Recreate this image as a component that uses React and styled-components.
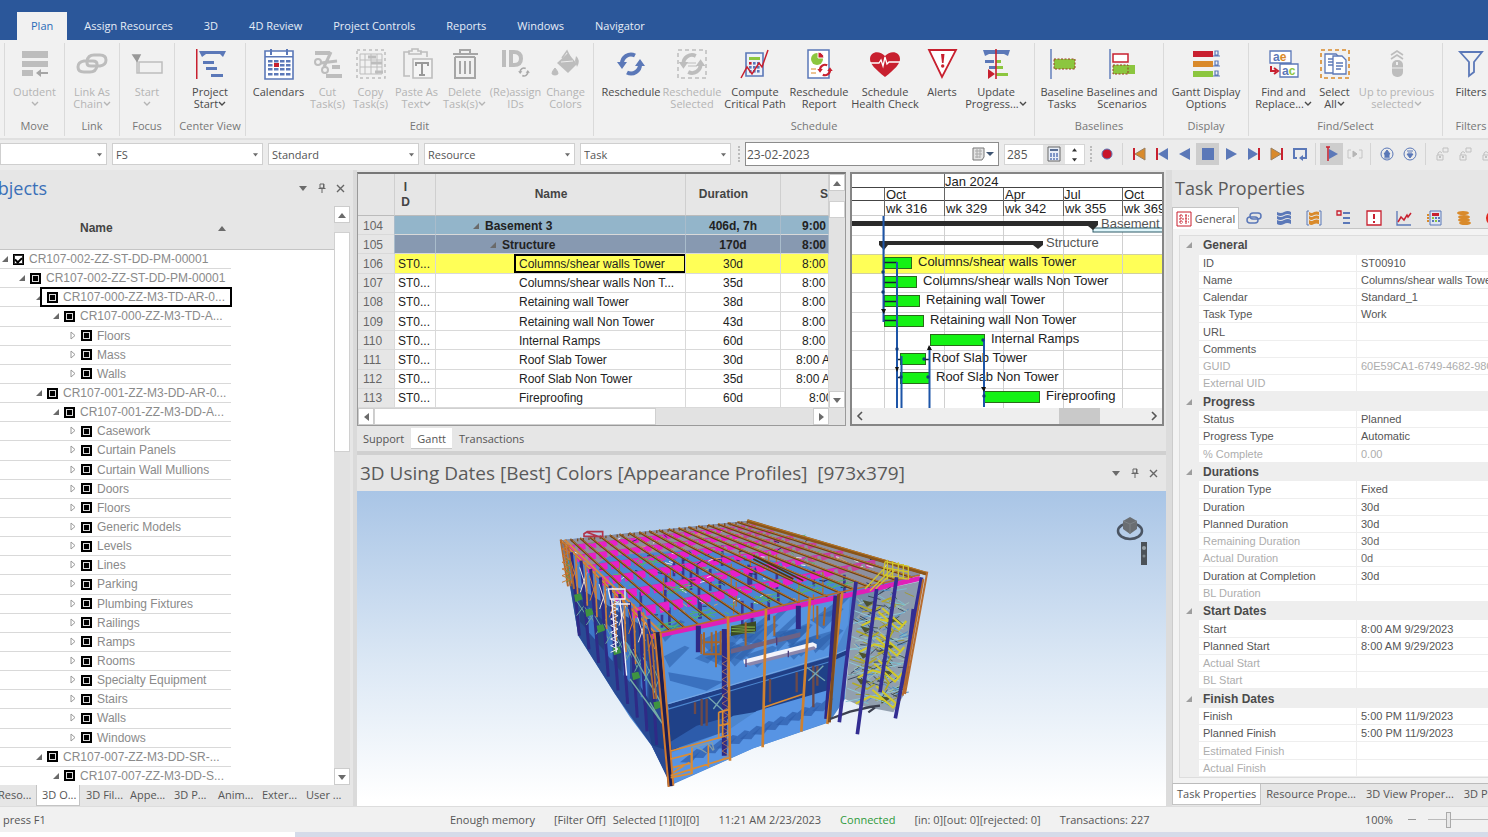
import { useState } from 'react';
import styled, { createGlobalStyle } from 'styled-components';

const UI = '"Open Sans", "Noto Sans", sans-serif';
const GRID = '"Liberation Sans", Arial, sans-serif';
const BLUE = '#5b78b8';
const GREY = '#bdbdbd';
const RED = '#c8202f';
const GREEN = '#8cc63f';
const ORANGE = '#d98a2b';

const tabs = ['Plan', 'Assign Resources', '3D', '4D Review', 'Project Controls', 'Reports', 'Windows', 'Navigator'];

const groups = [
  { name: 'Move', width: 60, items: [{ icon: 'outdent', lines: ['Outdent', ''], width: 58, menu: true, off: true }] },
  { name: 'Link', width: 55, items: [{ icon: 'link', lines: ['Link As', 'Chain'], width: 52, menu: true, off: true }] },
  { name: 'Focus', width: 55, items: [{ icon: 'start', lines: ['Start', ''], width: 52, menu: true, off: true }] },
  { name: 'Center View', width: 71, items: [{ icon: 'project', lines: ['Project', 'Start'], width: 60, menu: true }] },
  {
    name: 'Edit', width: 348, items: [
      { icon: 'calendar', lines: ['Calendars'], width: 54 },
      { icon: 'cut', lines: ['Cut', 'Task(s)'], width: 44, off: true },
      { icon: 'copy', lines: ['Copy', 'Task(s)'], width: 42, off: true },
      { icon: 'paste', lines: ['Paste As', 'Text'], width: 50, menu: true, off: true },
      { icon: 'trash', lines: ['Delete', 'Task(s)'], width: 46, menu: true, off: true },
      { icon: 'ids', lines: ['(Re)assign', 'IDs'], width: 56, off: true },
      { icon: 'bucket', lines: ['Change', 'Colors'], width: 44, off: true },
    ],
  },
  {
    name: 'Schedule', width: 441, items: [
      { icon: 'resched', lines: ['Reschedule'], width: 60 },
      { icon: 'reschedSel', lines: ['Reschedule', 'Selected'], width: 62, off: true },
      { icon: 'compute', lines: ['Compute', 'Critical Path'], width: 64 },
      { icon: 'report', lines: ['Reschedule', 'Report'], width: 64 },
      { icon: 'health', lines: ['Schedule', 'Health Check'], width: 68 },
      { icon: 'alerts', lines: ['Alerts'], width: 46 },
      { icon: 'update', lines: ['Update', 'Progress...'], width: 62, menu: true },
    ],
  },
  {
    name: 'Baselines', width: 129, items: [
      { icon: 'baseline', lines: ['Baseline', 'Tasks'], width: 46 },
      { icon: 'scenarios', lines: ['Baselines and', 'Scenarios'], width: 74 },
    ],
  },
  { name: 'Display', width: 85, items: [{ icon: 'gantt', lines: ['Gantt Display', 'Options'], width: 76 }] },
  {
    name: 'Find/Select', width: 194, items: [
      { icon: 'find', lines: ['Find and', 'Replace...'], width: 58, menu: true },
      { icon: 'select', lines: ['Select', 'All'], width: 44, menu: true },
      { icon: 'mouse', lines: ['Up to previous', 'selected'], width: 80, menu: true, off: true },
    ],
  },
  { name: 'Filters', width: 56, items: [{ icon: 'filter', lines: ['Filters'], width: 50 }] },
];

const tree = [
  [0, 'CR107-002-ZZ-ST-DD-PM-00001', 'checked'],
  [1, 'CR107-002-ZZ-ST-DD-PM-00001'],
  [2, 'CR107-000-ZZ-M3-TD-AR-0...', 'focused'],
  [3, 'CR107-000-ZZ-M3-TD-A...'],
  [4, 'Floors'], [4, 'Mass'], [4, 'Walls'],
  [2, 'CR107-001-ZZ-M3-DD-AR-0...'],
  [3, 'CR107-001-ZZ-M3-DD-A...'],
  [4, 'Casework'], [4, 'Curtain Panels'], [4, 'Curtain Wall Mullions'], [4, 'Doors'], [4, 'Floors'],
  [4, 'Generic Models'], [4, 'Levels'], [4, 'Lines'], [4, 'Parking'], [4, 'Plumbing Fixtures'],
  [4, 'Railings'], [4, 'Ramps'], [4, 'Rooms'], [4, 'Specialty Equipment'], [4, 'Stairs'], [4, 'Walls'], [4, 'Windows'],
  [2, 'CR107-007-ZZ-M3-DD-SR-...'],
  [3, 'CR107-007-ZZ-M3-DD-S...'],
];

const tasks = [
  { no: 104, name: 'Basement 3', dur: '406d, 7h', start: '9:00 AM', color: '#93b5ca', level: 1 },
  { no: 105, name: 'Structure', dur: '170d', start: '8:00 AM', color: '#8799b1', level: 2 },
  { no: 106, name: 'Columns/shear walls Tower', dur: '30d', start: '8:00 AM', color: '#ffff57', active: true },
  { no: 107, name: 'Columns/shear walls Non T...', dur: '35d', start: '8:00 AM' },
  { no: 108, name: 'Retaining wall Tower', dur: '38d', start: '8:00 AM' },
  { no: 109, name: 'Retaining wall Non Tower', dur: '43d', start: '8:00 AM' },
  { no: 110, name: 'Internal Ramps', dur: '60d', start: '8:00 AM' },
  { no: 111, name: 'Roof Slab Tower', dur: '30d', start: '8:00 AM', indent: 15 },
  { no: 112, name: 'Roof Slab Non Tower', dur: '35d', start: '8:00 AM', indent: 15 },
  { no: 113, name: 'Fireproofing', dur: '60d', start: '8:00 AM', indent: 28 },
];

const props = [
  ['General', [['ID', 'ST00910'], ['Name', 'Columns/shear walls Tower'], ['Calendar', 'Standard_1'], ['Task Type', 'Work'], ['URL', ''], ['Comments', ''], ['GUID', '60E59CA1-6749-4682-98CA', 1], ['External UID', '', 1]]],
  ['Progress', [['Status', 'Planned'], ['Progress Type', 'Automatic'], ['% Complete', '0.00', 1]]],
  ['Durations', [['Duration Type', 'Fixed'], ['Duration', '30d'], ['Planned Duration', '30d'], ['Remaining Duration', '30d', 2], ['Actual Duration', '0d', 2], ['Duration at Completion', '30d'], ['BL Duration', '', 1]]],
  ['Start Dates', [['Start', '8:00 AM 9/29/2023'], ['Planned Start', '8:00 AM 9/29/2023'], ['Actual Start', '', 1], ['BL Start', '', 1]]],
  ['Finish Dates', [['Finish', '5:00 PM 11/9/2023'], ['Planned Finish', '5:00 PM 11/9/2023'], ['Estimated Finish', '', 1], ['Actual Finish', '', 1]]],
];

// two chasing arrows
const Cycle = ({ color, x = 16, y = 16, s = 1 }) => (
  <g transform={`translate(${x} ${y}) scale(${s})`} fill="none" stroke={color} strokeWidth="4">
    <path d="M-9 0A9 9 0 0 1 4-8.500" />
    <path d="M9 0A9 9 0 0 1-4 8.500" />
    <path d="M-14-2h10l-5 7zM14 2H4l5-7z" fill={color} stroke="none" />
  </g>
);

const icons = {
  outdent: <g fill={GREY}><path d="M3 3h26v7H3zM3 13h26v6H3zM3 22h11v6H3z" /><path d="M17 25l5-4v3h7v2h-7v3z" fill="#a5a5a5" /></g>,
  link: <g fill="none" stroke={GREY} strokeWidth="3"><path d="M11 15v-2q1-6 7-6h6q6 0 6 5t-6 6h-9q-4 0-4-3" /><path d="M21 16v2q-1 6-7 6H8q-6 0-6-5t6-6h9q4 0 4 3" /></g>,
  start: <g fill="none" stroke={GREY} strokeWidth="1.500"><path d="M6 12v13h25V14H8v11" /><path d="M2 7h7l-3 6z" fill="#999" stroke="#999" /></g>,
  project: <g fill={BLUE}><path d="M5 3h27l-3 6-3-3H12l-4 3zM9 13h11v3H9zM12 19h11v3H12zM17 26h12v3H17z" /><path d="M2 1h1.500v30H2z" fill={RED} /></g>,
  calendar: (
    <g fill={BLUE}>
      <path d="M2 3h28v28H2z" fill="#fff" stroke={BLUE} strokeWidth="1.600" />
      <path d="M2 8h28v1.500H2zM7 1h2v6H7zM23 1h2v6h-2z" />
      {[12, 16, 20, 25].map((y) => [5, 11, 17, 23].map((x) => <rect key={x + y * 40} x={x} y={y} width="4.500" height="2.500" />))}
      <path d="M11 15h5v4h-5z" fill={RED} />
    </g>
  ),
  cut: (
    <g fill="none" stroke={GREY} strokeWidth="2">
      <path d="M3 5h15M20 19h8M14 28h16" strokeWidth="4" />
      <circle cx="6" cy="14" r="3" /><circle cx="13" cy="22" r="3" />
      <path d="M9 15l16-2M12 19L19 4" strokeWidth="3" />
    </g>
  ),
  copy: <g fill="none" stroke={GREY}><rect x="2" y="2" width="28" height="28" strokeDasharray="3 3" strokeWidth="1.500" /><path d="M5 6h22v20H5zM5 12h22M5 19h22M10 6v20M16 6v20M22 6v20" /><path d="M13 9h8M16 15h11M20 24h8" strokeWidth="3" /></g>,
  paste: <g fill="none" stroke={GREY} strokeWidth="1.600"><path d="M9 28H3V4h5M19 4h7v5" /><path d="M8 6V3h3V1h6v2h3v3z" /><path d="M12 11h19v19H12z" fill="#f5f5f5" /><path d="M15 18v-3h12v3M21 15v11M18 27h6" stroke="#999" strokeWidth="2" /></g>,
  trash: <g fill="none" stroke="#a6a6a6" strokeWidth="2"><path d="M4 6h25M11 5V2h10v3M6 9v21h20V9M6 9h20" /><path d="M11 13v13M16 13v13M21 13v13" /></g>,
  ids: <g fill="none" stroke={GREY} strokeWidth="4"><path d="M4 2v17M11 4h3q7 0 7 6.500t-7 6.500h-3z" /><Cycle color="#a8a8a8" x={24} y={24} s={0.42} /></g>,
  bucket: <g fill={GREY}><path d="M7 15L18 5l9 11-9 9z" /><path d="M12 10l5-7 3 6" fill="none" stroke={GREY} strokeWidth="1.500" /><path d="M5 20q6 7 0 7t0-7z" stroke={GREY} /><path d="M26 8q5 4 1 11l-2-6z" /><path d="M11 14l12-1" stroke="#eee" /></g>,
  resched: <Cycle color={BLUE} />,
  reschedSel: <g><rect x="2" y="2" width="28" height="28" fill="none" stroke={GREY} strokeWidth="1.500" strokeDasharray="4 3" /><Cycle color={GREY} s={0.95} /><path d="M11 15h9M12 18h9" stroke={GREY} /></g>,
  compute: (
    <g>
      <path d="M7 5h17v23H7z" fill="#eef1f8" stroke={BLUE} strokeWidth="1.600" />
      <path d="M10 9h11v3H10z" fill={GREEN} />
      {[14, 18, 22].map((y) => [10, 14, 18].map((x) => <rect key={x + y * 30} x={x} y={y} width="2.600" height="2.600" fill={x + y === 24 ? RED : BLUE} />))}
      <path d="M2 30l6-11 5 7 7-11 3 4 6-17" fill="none" stroke={RED} strokeWidth="1.500" />
    </g>
  ),
  report: (
    <g>
      <path d="M5 2h21v28H5z" fill="#fff" stroke={BLUE} strokeWidth="1.500" />
      <circle cx="14" cy="11" r="6" fill={GREEN} /><path d="M15 10V4a6 6 0 0 1 6 6z" fill={RED} stroke="#fff" />
      <path d="M8 21h5M8 25h5" stroke={ORANGE} />
      <Cycle color={RED} x={22} y={22} s={0.55} />
    </g>
  ),
  health: <g><path d="M16 29C6 21 1 16 1 11 1 3 11 2 16 8c5-6 15-5 15 3 0 5-5 10-15 18z" fill={RED} /><path d="M1 15h9l2-3 2 6 2-9 2 7 2-2h11" fill="none" stroke="#fff" strokeWidth="1.300" /></g>,
  alerts: <g><path d="M3 2h27L16 29z" fill="#fff" stroke={RED} strokeWidth="1.800" /><path d="M15 6h3.500l-1 9h-1.500z" fill={RED} /><circle cx="16.700" cy="18" r="1.700" fill={RED} /></g>,
  update: <g><path d="M3 2h27l-2 6-4-2H9L5 8z" fill={BLUE} /><path d="M5 12h9v3H5zM9 18h8v3H9z" fill={BLUE} /><path d="M16 12h5v3h-5zM16 18h7v3h-7zM16 25h12v3H16z" fill={GREEN} /><path d="M16 1v30" stroke={RED} strokeWidth="1.600" /><path d="M8 21l7 5-7 5z" fill={RED} /></g>,
  baseline: <g><path d="M5 1v30" stroke={BLUE} strokeWidth="1.400" /><path d="M8 11h21v10H8z" fill={GREEN} stroke="#9b3b22" strokeDasharray="2 1.500" /></g>,
  scenarios: <g><path d="M4 1v30" stroke={BLUE} strokeWidth="1.400" /><path d="M7 6h15v8H7z" fill="#fff" stroke={RED} strokeWidth="1.500" /><path d="M7 17h22v9H7z" fill={GREEN} /><path d="M7 17h15v9H7z" fill="none" stroke="#9b3b22" strokeDasharray="2 1.500" /></g>,
  gantt: (
    <g>
      {[RED, ORANGE, GREEN].map((c, i) => (
        <g key={c}>
          <path d={`M3 ${3 + i * 10}h20v6H3z`} fill={c} />
          <path d={`M23 ${8 + i * 10}h7M25 ${3 + i * 10}h3v4h-3z`} fill="none" stroke={BLUE} strokeWidth="1.200" />
        </g>
      ))}
    </g>
  ),
  find: (
    <g fontFamily="Liberation Sans, sans-serif" fontWeight="700" fontSize="12">
      <path d="M2 3h21v12H2zM12 16h18v13H12z" fill="#fff" stroke={BLUE} strokeWidth="1.300" />
      <text x="5" y="13" fill={BLUE}>a<tspan fill={ORANGE}>e</tspan></text>
      <text x="14" y="27" fill={BLUE}>a<tspan fill={GREEN}>c</tspan></text>
      <path d="M3 18v5h5M6 20l4 3-4 3" fill="none" stroke={RED} strokeWidth="2" />
    </g>
  ),
  select: <g fill="none" stroke={BLUE} strokeWidth="1.300"><rect x="2" y="2" width="28" height="28" stroke={ORANGE} strokeWidth="1.600" strokeDasharray="4 3" /><path d="M6 6h11l2 2v17H6z" fill="#fff" /><path d="M9 11h7M9 14h7M9 17h5" /><path d="M14 8h9l4 4v14H14z" fill="#fff" /><path d="M17 15h7M17 18h7M17 21h5" /></g>,
  mouse: <g><path d="M10 7l6-4 6 4M10 11l6-4 6 4" fill="none" stroke={GREY} strokeWidth="1.600" /><rect x="11" y="12" width="11" height="17" rx="5" fill={GREY} /><path d="M11 20h11" stroke="#eee" /><path d="M16 14v3" stroke="#eee" strokeWidth="2" /></g>,
  filter: <path d="M5 4h22l-8 10v10l-5 4V14z" fill="none" stroke={BLUE} strokeWidth="1.800" />,
};

const playIcons = {
  record: <g><circle cx="8" cy="8" r="5" fill="#c8142b" stroke={BLUE} /></g>,
  first: <g><path d="M3 2v12" stroke={RED} strokeWidth="2" /><path d="M14 2v12L4 8z" fill={ORANGE} stroke="#9a8060" /></g>,
  prev: <g><path d="M3 2v12" stroke={RED} strokeWidth="2" /><path d="M14 2v12L4 8z" fill={BLUE} /></g>,
  back: <path d="M13 2v12L2 8z" fill={BLUE} />,
  stop: <path d="M2 2h12v12H2z" fill={BLUE} />,
  play: <path d="M3 2v12l11-6z" fill={BLUE} />,
  next: <g><path d="M13 2v12" stroke={RED} strokeWidth="2" /><path d="M2 2v12l10-6z" fill={BLUE} /></g>,
  last: <g><path d="M13 2v12" stroke={RED} strokeWidth="2" /><path d="M2 2v12l10-6z" fill={ORANGE} stroke="#9a8060" /></g>,
  loop: <g><path d="M5 12H2V3h12v9h-3" fill="none" stroke={BLUE} strokeWidth="2" /><path d="M11 9v6l-4-3z" fill={BLUE} /></g>,
  flag: <g><path d="M4 1v14M2 1h4" stroke={RED} strokeWidth="1.500" /><path d="M5 3v10l9-5z" fill={BLUE} /></g>,
  frame: <g fill="none" stroke="#c4c4c4"><path d="M1 4h3M1 12h3M12 4h3M12 12h3M1 4v8M15 4v8" /><path d="M6 5v6l4-3z" fill="#b5b5b5" stroke="#b5b5b5" /></g>,
  up: <g fill="none" stroke={BLUE}><circle cx="8" cy="8" r="6" /><path d="M5 8l3-4 3 4zM6 8v3h4V8M5 12h6" fill={BLUE} /></g>,
  down: <g fill="none" stroke={BLUE}><circle cx="8" cy="8" r="6" /><path d="M5 8l3 4 3-4zM6 7h4M5 5h6" fill={BLUE} /></g>,
  lock: <g fill="none" stroke="#c0c0c0"><path d="M3 9h6v5H3zM4 9V7q2-3 4 0M9 2h5v4H9z" /><path d="M5 11h2" strokeWidth="2" /></g>,
};

const player = [
  ['record', 'Record'], null, ['first', 'First'], ['prev', 'Previous'], ['back', 'Play back'], ['stop', 'Stop', 1], ['play', 'Play'], ['next', 'Next'],
  ['last', 'Last'], ['loop', 'Loop'], null, ['flag', 'Focus time', 1], ['frame', 'Frame'], null, ['up', 'Step up'], ['down', 'Step down'], null,
  ['lock', 'Lock'], ['lock', 'Unlock'], ['lock', 'Lock all'],
];

const propIcons = {
  Links: <g fill="none" stroke={BLUE} strokeWidth="1.500"><rect x="4" y="3" width="11" height="6" rx="3" /><rect x="1" y="7" width="11" height="6" rx="3" /></g>,
  Resources: <g fill={BLUE}><path d="M1 2q4 2 7 0 4-2 7 0v3q-4-2-7 0-4 2-7 0zM1 6q4 2 7 0 4-2 7 0v3q-4-2-7 0-4 2-7 0zM1 10q4 2 7 0 4-2 7 0v4q-4-2-7 0-4 2-7 0z" /></g>,
  Assignments: <g><path d="M3 1H1v14h2M13 1h2v14h-2" fill="none" stroke={BLUE} /><path d="M3 2q3 2 5 0 3-1 5 0v3q-3-1-5 0-3 2-5 0zM3 6q3 2 5 0 3-1 5 0v3q-3-1-5 0-3 2-5 0zM3 10q3 2 5 0 3-1 5 0v4q-3-1-5 0-3 2-5 0z" fill={ORANGE} /></g>,
  Codes: <g><path d="M1 1h4v4H1z" fill="none" stroke={RED} strokeWidth="1.300" /><path d="M7 3h7M7 8h7M7 13h7" stroke={BLUE} strokeWidth="2" /></g>,
  Alerts: <g><path d="M1 1h14v14H1z" fill="#fff" stroke={RED} strokeWidth="1.300" /><path d="M8 4v5M8 11v2" stroke={RED} strokeWidth="2" /></g>,
  Chart: <g fill="none"><path d="M1 1v14h14" stroke={BLUE} strokeWidth="1.300" /><path d="M2 12l3-5 3 3 3-5 1 2 3-4" stroke={RED} strokeWidth="1.500" /></g>,
  Costs: <g><path d="M4 1h11v14H4z" fill="#dfe5f2" stroke={BLUE} /><path d="M6 3h7v3H6z" fill={RED} /><path d="M6 7h2v2H6zM9 10h2v2H9z" fill={GREEN} /><path d="M12 7h2v2h-2zM6 10h2v2H6zM9 7h2v2H9zM12 10h2v2h-2z" fill={BLUE} /><path d="M2 4v9" stroke={ORANGE} strokeWidth="2" strokeDasharray="2 1" /></g>,
  Money: <g fill={ORANGE}><ellipse cx="7" cy="3" rx="6" ry="2" /><ellipse cx="8" cy="7" rx="6" ry="2" /><ellipse cx="8" cy="10" rx="6" ry="2" /><ellipse cx="9" cy="13" rx="6" ry="2" /></g>,
  Status: <g><circle cx="8" cy="8" r="8" fill="#e0261c" /><path d="M8 8V1a7 7 0 0 1 7 7z" fill="#3aa53a" /></g>,
};

const Arrow = ({ open }) => (
  <svg width="10" height="10" viewBox="0 0 10 10">
    {open ? <path d="M8 2v6H2z" fill="#6a6a6a" /> : <path d="M3 1v7l4-3.500z" fill="none" stroke="#999" />}
  </svg>
);

const Tri = ({ dir = 'down', color = '#6b6b6b', size = 8 }) => {
  const d = { up: 'M0 7h8L4 2z', down: 'M0 2h8L4 7z', left: 'M7 0v8L2 4z', right: 'M2 0v8l5-4z' };
  return <svg width={size} height={size} viewBox="0 0 8 8"><path d={d[dir]} fill={color} /></svg>;
};

const PanelButtons = () => (
  <WindowButtons>
    <button aria-label="Menu"><Tri /></button>
    <button aria-label="Pin"><svg width="10" height="10" viewBox="0 0 10 10" fill="none" stroke="#666"><path d="M3 1h4v4H3zM1.500 5.500h7M5 6v4M6.500 1v4" /></svg></button>
    <button aria-label="Close"><svg width="9" height="9" viewBox="0 0 9 9" stroke="#666" strokeWidth="1.400"><path d="M1 1l7 7M8 1l-7 7" /></svg></button>
  </WindowButtons>
);

const bars = [
  [32, 59, 66, 'Columns/shear walls Tower', 2],
  [32, 64, 71, 'Columns/shear walls Non Tower', 3],
  [32, 67, 74, 'Retaining wall Tower', 4],
  [32, 71, 78, 'Retaining wall Non Tower', 5],
  [78, 132, 139, 'Internal Ramps', 6],
  [48, 73, 80, 'Roof Slab Tower', 7],
  [48, 77, 84, 'Roof Slab Non Tower', 8],
  [132, 187, 194, 'Fireproofing', 9],
];
const rowTop = (i) => 42 + i * 19.1;

const GanttChart = () => (
  <ChartSvg role="img" aria-label="Gantt chart">
    <g shapeRendering="crispEdges" fill="none">
      <rect y={rowTop(2)} width="100%" height="19" fill="#ffff57" />
      {[1, 2, 3, 4, 5, 6, 7, 8, 9].map((i) => <rect key={i} y={rowTop(i)} width="100%" height="1" fill={i === 2 || i === 3 ? '#d0d0a0' : '#d6d6d6'} />)}
      {[32, 92, 151, 211, 270].map((x) => <path key={x} d={`M${x}.500 42v192`} stroke="#d0d0d0" />)}
      <rect y="13" width="100%" height="1" fill="#444" />
      <rect y="26" width="100%" height="1" fill="#444" />
      <rect y="41" width="100%" height="1" fill="#ccc" />
      <path d="M32.500 14v28M92.500 0v42M151.500 14v28M211.500 14v28M270.500 14v28" stroke="#666" />
    </g>
    <text x="93" y="12">Jan 2024</text>
    {[[34, 'Oct'], [153, 'Apr'], [212, 'Jul'], [272, 'Oct']].map(([x, t]) => <text key={x} x={x} y="25">{t}</text>)}
    {[[34, 'wk 316'], [94, 'wk 329'], [153, 'wk 342'], [213, 'wk 355'], [272, 'wk 369']].map(([x, t]) => <text key={x} x={x} y="39">{t}</text>)}
    <text x="249" y="54" fill="#555">Basement 3</text>
    <rect x="241" y="54" width="100%" height="4" fill="#e0f6fb" stroke="#2d5a66" />
    <path d="M0 47h246v4l-5 5-5-4H0z" fill="#2b2b2b" />
    <path d="M27 67h164v4l-5 4-5-4H36l-4 5-5-5z" fill="#2b2b2b" />
    <text x="194" y="73" fill="#555">Structure</text>
    {bars.map(([x1, x2, tx, label, row]) => (
      <g key={label}>
        <rect x={x1 + 0.5} y={Math.round(rowTop(row)) + 3.5} width={x2 - x1} height="11" fill="#14f214" stroke="#2a6a1a" />
        <text x={tx} y={Math.round(rowTop(row)) + 12}>{label}</text>
      </g>
    ))}
    <path d="M32 88.500h13M32 108.500h13M32 127.500h13M32 146.500h13M45 185.500h5M45 203.500h5M73 185.500h5" stroke="#123" strokeWidth="1.500" />
    <path d="M31.500 42v106M45 88v146M49.500 182v52M77.500 173v61M132 165v68" stroke="#1d55a8" strokeWidth="2" fill="none" />
    <path d="M29 135h5l-2 5zM43 193h4l-2 5zM75 176h5l-3-5zM129 213h5l-2 5z" fill="#111" />
    {[[31, 98], [31, 118], [45, 175], [49, 203], [72, 185], [76, 203], [131, 166], [132, 222]].map(([x, y]) => <circle key={x + y * 9} cx={x} cy={y} r="1.700" fill="#123a7a" />)}
  </ChartSvg>
);

// ---- structural steel model ----
const A = [62, 124], B = [622, 66], C = [1160, 226], D = [352, 408];
const mix = (p, q, t) => [p[0] + (q[0] - p[0]) * t, p[1] + (q[1] - p[1]) * t];
const roof = (u, v) => mix(mix(A, B, u), mix(D, C, u), v);
const seg = (p, q) => `M${p[0].toFixed(1)} ${p[1].toFixed(1)}L${q[0].toFixed(1)} ${q[1].toFixed(1)}`;
const noise = (n) => { const s = Math.sin(n * 127.1) * 43758.5; return s - Math.floor(s); };
const range = (n) => Array.from({ length: n }, (_, i) => i);
const zig = (x, y1, y2, w, n) => 'M' + range(n + 1).map((i) => `${x + (i % 2 ? w : 0)} ${y1 + ((y2 - y1) * i) / n}`).join('L');

const Model = () => (
  <svg width="400" height="300" viewBox="0 0 1200 900" role="img" aria-label="Steel frame model">
    <path d="M62 124L622 66 1150 222 1040 262 930 375 915 600 868 670 640 748 394 858 335 740 270 655 225 585 115 410 88 250z" fill="#4c86cf" />
    <path d="M62 124L622 66 1150 222 352 408z" fill="#8d8f9e" />
    <path d="M130 220L210 170 480 150 800 200 930 275 560 370 352 405z" fill="#4a86d2" />
    <path d="M350 408L930 280 925 375 880 468 385 618 280 520z" fill="#5694e0" />
    {range(26).map((i) => {
      const x = 360 + noise(i) * 480;
      const y = 400 - (x - 360) * 0.15 + noise(i + 40) * 120;
      return <path key={i} d={`M${x} ${y}l${50 + noise(i + 9) * 50} ${-8 - noise(i + 5) * 60}l14 6l-60 60z`} fill="#2c5da8" opacity="0.550" />;
    })}
    <path d="M385 520L550 548 500 575 390 545z" fill="#2f62b0" opacity="0.700" />
    <path d="M385 632L885 485 872 600 580 650 390 760z" fill="#1f4188" />
    <path d="M335 740L392 762 570 690 650 636 868 572 868 668 640 748 394 856z" fill="#5794e4" />
    <path d="M392 728L470 680 560 655 560 696 396 752z" fill="#2d5cab" />
    {range(12).map((i) => <path key={i} d={`M${420 + i * 36} ${790 - i * 14}l50-40 14 3-30 38z`} fill="#2f5fae" opacity="0.750" />)}
    <path d="M88 250L352 408 392 858 335 740 225 585 115 410z" fill="#294a94" />
    {range(9).map((i) => <path key={i} d={`M${120 + i * 26} ${300 + i * 24}l20 20v${70 + i * 8}l-20-22z`} fill={i % 2 ? '#3d76c8' : '#24407f'} />)}
    <path d="M300 560L388 700 392 758 335 738z" fill="#1e3f86" />

    {/* interior columns */}
    {range(38).map((i) => {
      const p = roof(0.08 + noise(i + 3) * 0.74, 0.25 + noise(i + 70) * 0.7);
      return <path key={i} d={`M${p[0]} ${p[1]}v${35 + noise(i) * 50}`} stroke={i % 3 ? '#3b3690' : '#b9702c'} strokeWidth={i % 3 ? 8 : 4} />;
    })}
    {/* trusses, the near ones are deeper */}
    {[0.06, 0.16, 0.27, 0.4, 0.55, 0.73].map((v) => (
      <g key={v}>
        <path d={seg(roof(0, v), roof(1, v))} stroke="#cf2fae" strokeWidth={3 + v * 3} />
        {range(18).map((k) => {
          const u = k / 18;
          const a = roof(u, v), b = roof(u + 0.042, v);
          const h = (15 + v * 15) * (1 - u * 0.45);
          return <path key={k} d={`M${a[0]} ${a[1]}L${b[0]} ${b[1]}l2 ${h}L${a[0] + 5} ${a[1] + h + 3}z`} fill={u > 0.78 ? '#c4459c' : '#e81fca'} />;
        })}
      </g>
    ))}
    {range(120).map((i) => {
      const p = roof(noise(i), 0.05 + noise(i + 200) * 0.9);
      return <path key={i} d={`M${p[0]} ${p[1]}l${6 + noise(i + 4) * 16} ${10 - noise(i + 8) * 20}`} stroke={['#e8e6ee', '#58b568', '#2b2f66', '#c9a06a'][i % 4]} strokeWidth="3" />;
    })}
    {/* green bracing below the joists */}
    {[[450, 345], [640, 300], [770, 270], [380, 270], [350, 380], [860, 255], [290, 185]].map(([x, y]) => (
      <path key={x} d={`M${x} ${y}l70-16M${x} ${y + 14}l80-20M${x} ${y}l18 14 14-18 18 14 14-18M${x + 5} ${y - 8}l70 16`} stroke="#4fb46a" strokeWidth="3" fill="none" />
    ))}
    {/* joists */}
    {range(20).map((i) => {
      const u = i / 19;
      const a = roof(u, 0), b = roof(u, 1);
      return <g key={i}><path d={seg(a, b)} stroke="#6d3f12" strokeWidth="6" /><path d={seg([a[0], a[1] - 2], [b[0], b[1] - 2])} stroke="#b87a35" strokeWidth="3" /></g>;
    })}
    {range(34).map((i) => { const p = roof(i / 33, 0); return <path key={i} d={`M${p[0]} ${p[1]}v8`} stroke="#7a4a22" strokeWidth="4" />; })}
    <path d="M622 66L1160 224" stroke="#8a5518" strokeWidth="11" />
    <path d="M622 63L1160 220" stroke="#b87728" strokeWidth="3" />
    <path d="M640 180L760 240M640 170L790 245" stroke="#4e3312" strokeWidth="5" />

    {/* roof edges */}
    <path d="M330 414L945 284 1140 238" stroke="#df1fb8" strokeWidth="15" fill="none" />
    <path d="M350 404L945 270 1140 228" stroke="#b86d2c" strokeWidth="5" fill="none" />
    <path d="M62 124L350 405M74 122L362 398" stroke="#d08a45" strokeWidth="6" />
    <path d="M132 104l10-6h46v14h-56zM140 100l40 14" stroke="#b2344a" strokeWidth="5" fill="none" />

    {/* left elevation */}
    {range(9).map((i) => {
      const x = 100 + i * 29, top = 160 + i * 25, bottom = 410 + i * 41;
      return (
        <g key={i}>
          <path d={`M${x - 6} ${top}L${x + 18} ${bottom}`} stroke="#2f2a86" strokeWidth={9} />
          <path d={`M${x - 22} ${top - 20}l6 ${110 + i * 10}`} stroke="#d07d35" strokeWidth="5" />
          <path d={`M${x - 10} ${top + 20}l22 70M${x + 12} ${top + 35}l-20 60`} stroke={i % 2 ? '#e9dccc' : '#d07d35'} strokeWidth="3" />
          <path d={`M${x + 6} ${top + 140}l40 ${60 + i * 4}M${x + 40} ${top + 150}l-30 ${40 + i * 3}`} stroke="#6aa79d" strokeWidth="3" />
        </g>
      );
    })}
    {[[112, 295], [145, 340], [180, 388], [228, 455], [285, 530], [350, 618]].map(([x, y]) => <path key={x} d={`M${x - 10} ${y - 8}l20-4 6 18-22 8z`} fill="#3f9440" />)}
    <path d="M62 122l22 140M72 130l20 132M84 140l18 130" stroke="#b4672a" strokeWidth="6" />
    <path d={zig(66, 130, 250, 24, 12)} stroke="#c97933" strokeWidth="3" fill="none" />
    <path d={zig(78, 180, 250, 14, 8)} stroke="#4a9b4c" strokeWidth="2" fill="none" />
    <path d={zig(212, 300, 460, 22, 16)} stroke="#ece8f4" strokeWidth="3" fill="none" />
    <path d="M205 270h50v30h-44zM215 300l14 160M240 300l20 230M225 315h45" stroke="#f3f2fa" strokeWidth="4" fill="none" />
    <path d="M258 430l110 190M270 540l110 150M330 610l50 85" stroke="#74ada6" strokeWidth="4" />
    <path d="M322 405l20 195M335 410l14 190" stroke="#b56e31" strokeWidth="5" />

    {/* floor edge and front elevation */}
    <path d="M385 622L885 476 925 458" stroke="#203f86" strokeWidth="12" fill="none" />
    <path d="M385 614L885 466 925 450" stroke="#79a9e4" strokeWidth="3" fill="none" />
    <path d="M475 380v80M553 390v380M888 290l-28 370M775 320v70" stroke="#2e2a86" strokeWidth="15" />
    <path d="M573 450l208-50v14l-208 50z" fill="#6c6285" />
    <path d="M610 482l208-52 12 6v10l-204 52-14-4z" fill="#f4f4fb" />
    <path d="M612 494l210-52 8 8-200 50z" fill="#8b86ac" />
    <path d="M618 480v24M745 455v20M710 415v24" stroke="#4b3c7c" strokeWidth="4" />
    <path d="M573 382l75-15v30l-75 14z" fill="#3b4a24" /><path d={zig(575, 380, 402, 70, 5)} stroke="#87b64a" strokeWidth="2" fill="none" />
    <path d="M484 405v60M492 400v66h50v-70M492 430h50M515 400v60M528 395v110M617 370v70M832 320v100M855 325l-4 55M703 350v60" stroke="#a5652c" strokeWidth="6" fill="none" />
    <path d="M485 600v80M500 600v80M770 520v60M820 500v125M832 500v60M465 610v35M690 540v70" stroke="#6d4a49" strokeWidth="7" />
    <path d="M505 595l45 40M550 590l-30 40M800 505l55 40M850 500l-45 45" stroke="#76a6b0" strokeWidth="4" />
    <path d="M350 400L392 862" stroke="#1c1d52" strokeWidth="17" />
    <path d="M344 402L386 864M362 402L400 860" stroke="#d0792f" strokeWidth="6" />
    <path d={zig(546, 470, 780, 20, 26)} stroke="#d08b4c" strokeWidth="2" fill="none" />
    <path d="M564 352L570 785M678 330L668 745M810 296L784 698M907 280L862 675" stroke="#cf812f" strokeWidth="8" />
    <path d="M896 285L868 670" stroke="#7e4c20" strokeWidth="9" />
    <path d="M672 625L788 586M392 756L568 708M536 640v80M536 640l30-8M536 680l30-6M548 640v70M392 830L570 775M392 780l62-16v60l-62 12M400 805l50-12M505 735v70M400 820l48-30M456 745v80" stroke="#dc8c33" strokeWidth="5" fill="none" />
    <path d="M456 745l60-14 6 22M470 742l30 20M505 735l15 20" stroke="#839ba8" strokeWidth="4" fill="none" />

    {/* stair tower */}
    <path d="M945 290L1150 245 1090 590 1060 640 960 620 915 600z" fill="#7d8c9c" opacity="0.800" />
    {range(210).map((i) => {
      const t = noise(i), y = 275 + t * 335, x = 945 - t * 28 + noise(i + 260) * 150;
      return <path key={i} d={`M${x} ${y}l${14 + noise(i + 3) * 28} ${(noise(i + 12) - 0.5) * 54}`} stroke={['#79bed0', '#9bc0ba', '#47584d', '#a09a3a', '#4f8fc7', '#3c4a5c'][i % 6]} strokeWidth="3" />;
    })}
    {range(4).map((i) => {
      const y = 288 + i * 78, x = 955 - i * 6;
      return (
        <g key={i} fill="none">
          <path d={`M${x + 12} ${y + 15}l34 8-20 12zM${x + 82} ${y + 70}l36 4-30 18z`} fill="#4c5230" />
          <path d={`M${x - 20} ${y + 86}l160-34M${x - 15} ${y + 46}l150 56`} stroke="#8fc6d4" strokeWidth="3" />
          <path d={`M${x} ${y + 30}l45 18 22-14M${x + 70} ${y + 20}l26-10 14 20-12 22`} stroke="#b3aa24" strokeWidth="5" />
          <path d={`M${x + 60} ${y + 50}l62 54 22-26M${x + 72} ${y + 40}l58 50M${x + 10} ${y + 92}l44-22 40 10`} stroke="#d2c829" strokeWidth="6" />
        </g>
      );
    })}
    <path d="M1035 188l70 14v40M1042 182v60M1035 188l-5 40 72 12M1030 205l74 14M1058 186v50M1075 190v50M1090 195v46M975 270l60-64M990 275l62-62M1006 270l58-56" stroke="#d0c62c" strokeWidth="4" fill="none" />
    <path d="M870 660l60-22 60-14 30-4M985 640l20-14" stroke="#3c4150" strokeWidth="7" fill="none" />
    <path d="M948 248L898 670M1010 270L952 706M1145 235L1066 658M1070 235L1020 580M1120 330L1095 560" stroke="#332d92" strokeWidth="11" />
    <path d="M1162 218L1095 585M1150 240L1088 590" stroke="#b86d30" strokeWidth="6" />
  </svg>
);

const App = () => {
  const [tab, setTab] = useState('Plan');

  return (
    <Page>
      <GlobalStyle />
      <TopTabs>
        {tabs.map((t) => <TopTab key={t} $active={t === tab} onClick={() => setTab(t)}>{t}</TopTab>)}
      </TopTabs>

      <Ribbon>
        <RibbonEdge />
        {groups.map((g) => (
          <Group key={g.name} $width={g.width}>
            <GroupItems>
              {g.items.map((it) => (
                <RibbonButton key={it.icon} $width={it.width} $off={it.off}>
                  <svg width="32" height="32" viewBox="0 0 32 32">{icons[it.icon]}</svg>
                  {it.lines.map((line, i) => (
                    <span key={i}>
                      {line}
                      {it.menu && i === 1 && <Caret viewBox="0 0 8 8"><path d="M1 2l3 3 3-3" /></Caret>}
                    </span>
                  ))}
                </RibbonButton>
              ))}
            </GroupItems>
            <GroupName>{g.name}</GroupName>
          </Group>
        ))}
      </Ribbon>

      <Toolbar>
        {[['Filter', '', 107], ['Link type', 'FS', 151], ['Calendar', 'Standard', 151], ['Resource', 'Resource', 151], ['Task', 'Task', 151]].map(([label, value, width]) => (
          <Combo key={label} $width={width}>
            <select aria-label={label} defaultValue={value}><option>{value}</option></select>
            <Tri size={5} />
          </Combo>
        ))}
        <Grip />
        <DateBox>
          <input aria-label="Date" defaultValue="23-02-2023" />
          <svg width="22" height="14" viewBox="0 0 22 14"><path d="M1 1h11v9l-2 3H1z" fill="#e4e4e4" stroke="#777" /><path d="M3 4h7M3 7h7M3 10h5M5 2v9M8 2v9" stroke="#aaa" /><path d="M14 5h8l-4 4z" fill="#3f5573" /></svg>
        </DateBox>
        <NumberBox>
          <input aria-label="Day" defaultValue="285" />
          <button aria-label="Calculator"><svg width="14" height="16" viewBox="0 0 14 16"><path d="M1 1h12v14H1z" fill="#e9eef7" stroke="#666" /><path d="M3 3h8v2H3z" fill="#5a6f94" /><path d="M3 8h8M3 10h8M3 13h8" stroke={BLUE} strokeWidth="1.500" strokeDasharray="2 1" /></svg></button>
          <Spin><Tri dir="up" size={5} color="#333" /><Tri size={5} color="#333" /></Spin>
        </NumberBox>
        <Grip />
        {player.map((p, i) => p
          ? <PlayButton key={i} aria-label={p[1]} $on={p[2]}><svg width="16" height="16" viewBox="0 0 16 16">{playIcons[p[0]]}</svg></PlayButton>
          : <Divider key={i} />)}
      </Toolbar>

      <Main>
        <LeftPanel>
          <ObjectsHead>
            <ClippedTitle>bjects</ClippedTitle>
            <PanelButtons />
          </ObjectsHead>
          <TreeArea>
            <TreeMain>
              <TreeHeader><span>Name</span><Tri dir="up" /></TreeHeader>
              <Tree>
                {tree.map(([level, label, state], i) => (
                  <TreeRow key={i} $level={level}>
                    <Arrow open={level < 4} />
                    <TreeCell $focused={state === 'focused'}>
                      <Tick type="checkbox" defaultChecked $full={state === 'checked'} />
                      {label}
                    </TreeCell>
                  </TreeRow>
                ))}
              </Tree>
            </TreeMain>
            <VScroll>
              <ScrollButton aria-label="Up"><Tri dir="up" /></ScrollButton>
              <Thumb $top={9} $size={220} />
              <ScrollButton aria-label="Down"><Tri /></ScrollButton>
            </VScroll>
          </TreeArea>
          <ObjectTabs>
            {['Reso...', '3D O...', '3D Fil...', 'Appe...', '3D P...', 'Anim...', 'Exter...', 'User ...'].map((t, i) => (
              <BottomTab key={t} $active={i === 1}>{t}</BottomTab>
            ))}
          </ObjectTabs>
        </LeftPanel>

        <Center>
          <Split>
            <GridBox>
              <GridTop>
                <TableWrap>
                  <TaskTable>
                    <colgroup><col width="37" /><col width="41" /><col width="250" /><col width="95" /><col /></colgroup>
                    <thead><tr><th /><th>I<br />D</th><th>Name</th><th>Duration</th><StartHead>Start</StartHead></tr></thead>
                    <tbody>
                      {tasks.map((t) => (
                        <TaskRow key={t.no} $color={t.color} $bold={t.level}>
                          <td>{t.no}</td>
                          <td>{t.level ? '' : 'ST0...'}</td>
                          <NameCell $level={t.level} $active={t.active}>
                            <div>{t.level && <Arrow open />}{t.name}</div>
                          </NameCell>
                          <td>{t.dur}</td>
                          <StartCell $indent={t.indent || 21}>{t.start}</StartCell>
                        </TaskRow>
                      ))}
                    </tbody>
                  </TaskTable>
                </TableWrap>
                <VScroll>
                  <ScrollButton aria-label="Up"><Tri dir="up" /></ScrollButton>
                  <Thumb $top={10} $size={17} />
                  <ScrollButton aria-label="Down"><Tri /></ScrollButton>
                </VScroll>
              </GridTop>
              <HScroll>
                <ScrollButton aria-label="Left"><Tri dir="left" /></ScrollButton>
                <HThumb />
                <ScrollButton aria-label="Right"><Tri dir="right" /></ScrollButton>
              </HScroll>
            </GridBox>
            <ChartBox>
              <GanttChart />
              <ChartScroll>
                <button aria-label="Scroll left"><svg width="8" height="10" viewBox="0 0 8 10"><path d="M6 1L2 5l4 4" /></svg></button>
                <i />
                <button aria-label="Scroll right"><svg width="8" height="10" viewBox="0 0 8 10"><path d="M2 1l4 4-4 4" /></svg></button>
              </ChartScroll>
            </ChartBox>
          </Split>
          <SupportTabs>
            <SupportTab>Support</SupportTab>
            <SupportTab $active>Gantt</SupportTab>
            <SupportTab>Transactions</SupportTab>
          </SupportTabs>
          <Splitter />
          <ViewHead>
            <ViewTitle>3D Using Dates [Best] Colors [Appearance Profiles]&nbsp; [973x379]</ViewTitle>
            <PanelButtons />
          </ViewHead>
          <View>
            <Model />
            <Orbit width="34" height="56" viewBox="0 0 34 56">
              <ellipse cx="14" cy="14" rx="12" ry="8" fill="none" stroke="#4b5563" strokeWidth="2.500" />
              <path d="M7 4l7-4 7 4v8l-7 5-7-5z" fill="#6a6e72" />
              <path d="M7 4l7 3 7-3M14 7v10" stroke="#7d8286" fill="none" />
              <path d="M25 25h6v23h-6z" fill="#4c5258" /><circle cx="28" cy="31" r="2" fill="#9aa3a9" /><circle cx="28" cy="39" r="1.500" fill="#7d868c" />
            </Orbit>
          </View>
        </Center>

        <RightPanel>
          <RightTitle>Task Properties</RightTitle>
          <PropTabs>
            <GeneralTab>
              <svg width="16" height="16" viewBox="0 0 16 16" fill="none" stroke={RED}><path d="M1 1h14v14H1z" /><path d="M3 5h4M9 5h4M3 8h10M3 11h4M9 11h4M5 3v10M10 3v10" strokeDasharray="2 1" /></svg>
              General
            </GeneralTab>
            {Object.keys(propIcons).map((k) => (
              <PropTab key={k} aria-label={k}><svg width="16" height="16" viewBox="0 0 16 16">{propIcons[k]}</svg></PropTab>
            ))}
          </PropTabs>
          <PropFrame>
            <PropTable>
              <colgroup><col width="19" /><col width="158" /><col /></colgroup>
              {props.map(([name, rows]) => (
                <tbody key={name}>
                  <PropGroup><td><Arrow open /></td><th colSpan="2">{name}</th></PropGroup>
                  {rows.map(([k, v, dim]) => <PropRow key={k} $dim={dim}><td /><td>{k}</td><td>{v}</td></PropRow>)}
                </tbody>
              ))}
            </PropTable>
          </PropFrame>
          <PanelTabs>
            <BottomTab $active>Task Properties</BottomTab>
            <BottomTab>Resource Prope...</BottomTab>
            <BottomTab>3D View Proper...</BottomTab>
            <BottomTab>3D Proper...</BottomTab>
          </PanelTabs>
        </RightPanel>
      </Main>

      <Status>
        <Help>press F1</Help>
        <span>Enough memory</span>
        <Pair><span>[Filter Off]</span><span>Selected [1][0][0]</span></Pair>
        <span>11:21 AM 2/23/2023</span>
        <Connected>Connected</Connected>
        <span>[in: 0][out: 0][rejected: 0]</span>
        <span>Transactions: 227</span>
        <ZoomBox>
          <label htmlFor="zoom">100%</label>
          <button aria-label="Zoom out" />
          <input id="zoom" type="range" defaultValue="32" />
        </ZoomBox>
      </Status>
      <Taskbar><i /></Taskbar>
    </Page>
  );
};

export default App;

const GlobalStyle = createGlobalStyle`
  *{ box-sizing:border-box; }
  body{ margin:0; overflow:hidden; font-family:${UI}; font-size:11px; color:#555; }
  button, input, select{ font:inherit; color:inherit; margin:0; }
  button{ border:0; background:none; padding:0; }
  svg{ display:block; flex:none; }
`;

const Page = styled.div`
  display:flex;
  flex-direction:column;
  height:100vh;
  background:#e6e6e6;
`;

const TopTabs = styled.nav`
  flex:none;
  display:flex;
  align-items:flex-end;
  gap:3px;
  height:40px;
  padding-left:17px;
  background:#2b579a;
`;

const TopTab = styled.button`
  height:28px;
  padding:0 14px 2px;
  white-space:nowrap;
  color:${(p) => (p.$active ? '#2b6cb8' : '#e6edf7')};
  background:${(p) => (p.$active ? '#f1f1f1' : 'transparent')};
`;

const Ribbon = styled.div`
  flex:none;
  display:flex;
  height:100px;
  padding:3px 0 2px;
  overflow:hidden;
  background:#f1f1f1;
  border-bottom:2px solid #e0e0e0;
`;

const RibbonEdge = styled.div`
  flex:none;
  width:5px;
  border-right:1px solid #dadada;
`;

const Group = styled.section`
  flex:none;
  display:flex;
  flex-direction:column;
  width:${(p) => p.$width}px;
  border-right:1px solid #dadada;
  &:last-child{ border:0; }
`;

const GroupItems = styled.div`
  flex:1;
  display:flex;
  justify-content:center;
  padding-top:5px;
`;

const GroupName = styled.div`
  height:20px;
  line-height:20px;
  text-align:center;
  color:#777;
`;

const RibbonButton = styled.button`
  display:flex;
  flex-direction:column;
  align-items:center;
  width:${(p) => p.$width}px;
  color:${(p) => (p.$off ? '#b4b4b4' : '#4a4a4a')};
  white-space:nowrap;
  svg{ margin-bottom:6px; }
  span{ display:flex; align-items:center; height:12px; line-height:12px; }
  span svg{ margin:0; }
`;

const Caret = styled.svg`
  width:8px;
  height:8px;
  fill:none;
  stroke:currentColor;
  stroke-width:1.4;
`;

const Toolbar = styled.div`
  flex:none;
  display:flex;
  align-items:center;
  height:30px;
  padding-bottom:2px;
  overflow:hidden;
  background:#ececec;
`;

const Combo = styled.div`
  flex:none;
  display:flex;
  align-items:center;
  width:${(p) => p.$width}px;
  height:22px;
  margin-right:5px;
  padding-right:4px;
  background:#fff;
  border:1px solid #cfcfcf;
  select{
    flex:1;
    height:20px;
    padding:0 3px;
    border:0;
    outline:0;
    background:none;
    appearance:none;
    color:#555;
  }
`;

const Grip = styled.i`
  flex:none;
  width:3px;
  height:16px;
  margin:0 2px;
  border-left:2px dotted #bbb;
`;

const DateBox = styled.div`
  flex:none;
  display:flex;
  align-items:center;
  width:254px;
  height:24px;
  margin-left:2px;
  padding-right:4px;
  background:#fff;
  border:1px solid #8c8c8c;
  input{
    flex:1;
    min-width:0;
    padding:0 1px;
    border:0;
    outline:0;
    font-size:12px;
  }
`;

const NumberBox = styled.div`
  flex:none;
  display:flex;
  align-items:center;
  width:81px;
  height:21px;
  margin:0 3px 0 5px;
  background:#fff;
  border:1px solid #d5d5d5;
  input{ width:38px; padding:0 2px; border:0; outline:0; font-size:12px; }
  button{ display:flex; align-items:center; justify-content:center; width:22px; height:19px; background:#e3e3e3; }
`;

const Spin = styled.span`
  display:flex;
  flex-direction:column;
  gap:5px;
  margin-left:7px;
`;

const PlayButton = styled.button`
  flex:none;
  display:flex;
  align-items:center;
  justify-content:center;
  width:23px;
  height:22px;
  background:${(p) => (p.$on ? '#cdcdcd' : 'none')};
`;

const Divider = styled.i`
  flex:none;
  width:1px;
  height:22px;
  margin:0 4px;
  background:#d4d4d4;
`;

const Main = styled.main`
  flex:1;
  display:flex;
  min-height:0;
`;

const LeftPanel = styled.aside`
  flex:none;
  display:flex;
  flex-direction:column;
  width:357px;
  padding-right:3px;
  border-right:4px solid #dadada;
`;

const Title = styled.h2`
  margin:0;
  font-size:18px;
  font-weight:400;
  line-height:24px;
  white-space:nowrap;
  color:#5a5a5a;
`;

const ViewTitle = styled(Title)`
  font-size:19px;
`;

const ObjectsHead = styled.div`
  flex:none;
  display:flex;
  justify-content:space-between;
  align-items:center;
  height:36px;
`;

const ClippedTitle = styled(Title)`
  display:flex;
  justify-content:flex-end;
  width:47px;
  overflow:hidden;
  color:#3a70b8;
`;

const WindowButtons = styled.div`
  display:flex;
  button{ display:flex; align-items:center; justify-content:center; width:19px; height:16px; }
`;

const TreeArea = styled.div`
  flex:1;
  display:flex;
  min-height:0;
`;

const TreeMain = styled.div`
  flex:1;
  display:flex;
  flex-direction:column;
  background:#fff;
`;

const TreeHeader = styled.div`
  flex:none;
  display:flex;
  align-items:center;
  justify-content:space-between;
  height:44px;
  padding:0 0 0 80px;
  font:700 12px ${GRID};
  color:#444;
  background:#e6e6e6;
  border-bottom:1px solid #c5c5c5;
  svg{ margin-right:108px; }
`;

const Tree = styled.ul`
  flex:1;
  display:flex;
  flex-direction:column;
  width:231px;
  min-height:0;
  margin:0;
  padding:0;
  list-style:none;
  font:12px ${GRID};
  color:#8a8a8a;
`;

const TreeRow = styled.li`
  flex:1;
  display:flex;
  align-items:center;
  min-height:0;
  padding-left:${(p) => p.$level * 17}px;
  border-bottom:1px solid #d9d9d9;
  &:last-child{ border:0; }
`;

const TreeCell = styled.label`
  flex:1;
  display:flex;
  align-items:center;
  gap:5px;
  height:18px;
  margin-left:-3px;
  padding-left:6px;
  white-space:nowrap;
  outline:${(p) => (p.$focused ? '2px solid #000' : 'none')};
  outline-offset:-1px;
`;

const Tick = styled.input`
  flex:none;
  width:11px;
  height:11px;
  appearance:none;
  border:1px solid #000;
  background:${(p) => (p.$full ? '#fff' : '#000')};
  box-shadow:${(p) => (p.$full ? 'inset 0 0 0 1px #333' : 'inset 0 0 0 1px #000, inset 0 0 0 2px #ddd')};
  display:grid;
  place-items:center;
  &::after{
    content:'';
    display:${(p) => (p.$full ? 'block' : 'none')};
    width:5px;
    height:3px;
    border-left:2px solid #000;
    border-bottom:2px solid #000;
    transform:rotate(-45deg);
  }
`;

const VScroll = styled.div`
  flex:none;
  display:flex;
  flex-direction:column;
  width:16px;
  background:#e2e2e2;
`;

const ScrollButton = styled.button`
  flex:none;
  display:flex;
  align-items:center;
  justify-content:center;
  width:16px;
  height:17px;
  background:#fff;
  border:1px solid #ccc;
`;

const Thumb = styled.div`
  height:${(p) => p.$size}px;
  margin:${(p) => p.$top}px 0 auto;
  background:#fff;
  border:1px solid #d0d0d0;
`;

const ObjectTabs = styled.div`
  flex:none;
  display:flex;
  height:21px;
  margin-left:-8px;
  button{ width:44px; padding:0 5px; }
`;

const BottomTab = styled.button`
  flex:none;
  height:21px;
  padding:0 4px;
  line-height:20px;
  white-space:nowrap;
  text-align:left;
  background:${(p) => (p.$active ? '#fff' : 'none')};
  border:1px solid ${(p) => (p.$active ? '#c4c4c4' : 'transparent')};
  border-top:0;
`;

const Center = styled.section`
  flex:1;
  display:flex;
  flex-direction:column;
  min-width:0;
`;

const Split = styled.div`
  flex:none;
  display:flex;
  gap:4px;
  height:256px;
  padding-top:2px;
`;

const GridBox = styled.div`
  flex:none;
  display:flex;
  flex-direction:column;
  width:489px;
  border:1px solid #9a9a9a;
  border-top:2px solid #777;
`;

const GridTop = styled.div`
  flex:1;
  display:flex;
  min-height:0;
`;

const TableWrap = styled.div`
  flex:1;
  min-width:0;
`;

const TaskTable = styled.table`
  width:100%;
  height:100%;
  table-layout:fixed;
  border-collapse:separate;
  border-spacing:0;
  font:12px ${GRID};
  background:#fff;
  color:#222;
  th{
    height:42px;
    padding:0 19px 0 0;
    line-height:15px;
    color:#444;
    background:#e6e6e6;
    border-right:1px solid #cfcfcf;
    border-bottom:1px solid #bbb;
  }
`;

const StartHead = styled.th`
  && { padding:0 0 0 39px; overflow:hidden; white-space:nowrap; text-align:left; }
`;

const TaskRow = styled.tr`
  td{
    padding:1px 0 0;
    overflow:hidden;
    white-space:nowrap;
    text-align:center;
    background:${(p) => p.$color || '#fff'};
    font-weight:${(p) => (p.$bold ? 700 : 400)};
    border-right:1px solid ${(p) => (p.$bold ? '#a9bccb' : '#d9d9d9')};
    border-bottom:1px solid #d9d9d9;
  }
  td:first-child{ padding-left:5px; text-align:left; font-weight:400; color:#666; background:#e6e6e6; }
  td:nth-child(2){ padding-left:3px; text-align:left; }
`;

const NameCell = styled.td`
  div{
    display:flex;
    align-items:center;
    gap:4px;
    height:17px;
    margin-left:${(p) => (p.$level ? 18 + p.$level * 17 : 79)}px;
    padding-left:${(p) => (p.$level ? 0 : 4)}px;
    outline:${(p) => (p.$active ? '2px solid #000' : 'none')};
    outline-offset:-1px;
  }
`;

const StartCell = styled.td`
  && { padding-left:${(p) => p.$indent}px; text-align:left; }
`;

const HScroll = styled.div`
  flex:none;
  display:flex;
  height:17px;
  padding-right:16px;
  background:#e2e2e2;
`;

const HThumb = styled.div`
  width:282px;
  margin-right:auto;
  background:#fff;
  border:1px solid #d0d0d0;
`;

const ChartBox = styled.div`
  flex:1;
  display:flex;
  flex-direction:column;
  min-width:0;
  margin-right:2px;
  background:#fff;
  border:2px solid #858585;
`;

const ChartSvg = styled.svg`
  flex:1;
  width:100%;
  min-height:0;
  overflow:hidden;
  font:13px ${GRID};
  fill:#222;
`;

const ChartScroll = styled.div`
  flex:none;
  display:flex;
  align-items:center;
  justify-content:space-between;
  height:16px;
  padding:0 4px;
  background:#eee;
  i{ width:41px; height:16px; margin-left:auto; margin-right:50px; background:#c9c9c9; }
  svg{ fill:none; stroke:#555; stroke-width:1.6; }
`;

const SupportTabs = styled.div`
  flex:none;
  display:flex;
  gap:1px;
  height:25px;
  padding-top:2px;
`;

const SupportTab = styled.button`
  height:21px;
  padding:0 6px;
  background:${(p) => (p.$active ? '#fff' : 'none')};
  border-bottom:1px solid ${(p) => (p.$active ? '#c8c8c8' : 'transparent')};
`;

const Splitter = styled.div`
  flex:none;
  height:4px;
  background:#d0d0d0;
`;

const ViewHead = styled.div`
  flex:none;
  display:flex;
  justify-content:space-between;
  align-items:center;
  height:36px;
  padding:0 3px;
`;

const View = styled.div`
  flex:1;
  position:relative;
  display:flex;
  justify-content:center;
  align-items:center;
  min-height:0;
  padding-right:43px;
  background:linear-gradient(#a9c5e6, #dce8f5 55%, #fff 98%);
`;

const Orbit = styled.svg`
  position:absolute;
  top:26px;
  right:16px;
`;

const RightPanel = styled.aside`
  flex:none;
  display:flex;
  flex-direction:column;
  width:322px;
  overflow:hidden;
  border-left:6px solid #dcdcdc;
`;

const RightTitle = styled(Title)`
  flex:none;
  height:37px;
  padding:6px 0 0 3px;
`;

const PropTabs = styled.div`
  flex:none;
  display:flex;
  height:22px;
  border-bottom:1px solid #c5c5c5;
`;

const PropTab = styled.button`
  flex:none;
  display:flex;
  align-items:center;
  justify-content:center;
  width:30px;
`;

const GeneralTab = styled(PropTab)`
  gap:3px;
  width:67px;
  height:22px;
  background:#fff;
  border:1px solid #c5c5c5;
  border-bottom:0;
`;

const PropFrame = styled.div`
  flex:1;
  min-height:0;
  padding:6px 0 5px 6px;
  background:#f3f3f3;
  border-left:1px solid #ccc;
  border-bottom:1px solid #bbb;
`;

const PropTable = styled.table`
  width:100%;
  height:100%;
  table-layout:fixed;
  border-collapse:separate;
  border-spacing:0;
  border:1px solid #ddd;
  border-right:0;
  font:11px ${GRID};
  color:#555;
  background:#fff;
`;

const PropGroup = styled.tr`
  td, th{ padding:0 4px; text-align:left; background:#eee; font-size:12px; color:#4a4a4a; }
  svg{ opacity:0.6; }
`;

const PropRow = styled.tr`
  color:${(p) => (p.$dim ? '#adadad' : 'inherit')};
  td{
    padding:0 4px;
    overflow:hidden;
    white-space:nowrap;
    border-right:1px solid #eee;
    border-bottom:1px solid #eee;
  }
  td:first-child{ background:#eee; }
  td:last-child{ padding-right:0; border-right:0; color:${(p) => (p.$dim === 2 ? '#666' : 'inherit')}; }
`;

const PanelTabs = styled.div`
  flex:none;
  display:flex;
  height:22px;
`;

const Status = styled.footer`
  flex:none;
  display:flex;
  align-items:center;
  gap:19px;
  height:26px;
  overflow:hidden;
  white-space:nowrap;
  background:#f1f1f1;
  border-top:1px solid #ddd;
`;

const Help = styled.span`
  flex:none;
  width:431px;
  padding-left:3px;
`;

const Pair = styled.span`
  display:flex;
  gap:7px;
`;

const Connected = styled.span`
  color:#2f9a3c;
`;

const ZoomBox = styled.div`
  flex:none;
  display:flex;
  align-items:center;
  width:123px;
  margin-left:auto;
  overflow:hidden;
  button{ flex:none; width:8px; height:1px; margin:0 12px 0 15px; background:#999; }
  input{
    flex:none;
    width:60px;
    height:18px;
    appearance:none;
    background:linear-gradient(#bbb,#bbb) center/100% 1px no-repeat;
  }
  input::-webkit-slider-thumb{
    appearance:none;
    width:5px;
    height:16px;
    background:#e8e8e8;
    border:1px solid #aaa;
  }
`;

const Taskbar = styled.div`
  flex:none;
  height:5px;
  background:#d5dbe9;
  i{ display:block; width:295px; height:5px; background:#fff; }
`;
